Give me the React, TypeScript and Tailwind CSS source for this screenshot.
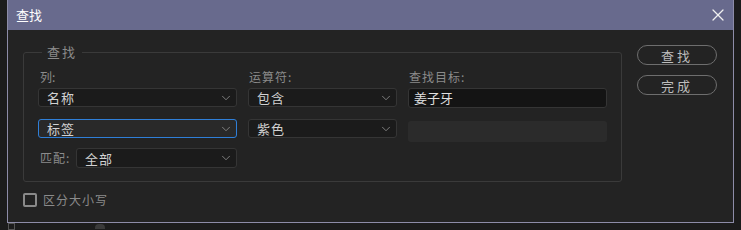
import { ChevronDown, X } from "lucide-react";

const font = { fontFamily: '"Noto Sans CJK SC", "Noto Sans", sans-serif' };

function Select({ value, focused, className }: { value: string; focused?: boolean; className: string }) {
  return (
    <div
      className={`flex items-center justify-between h-[19px] rounded-[3px] border pl-[8px] pr-[3px] text-[13px] leading-none ${
        focused ? "border-[#2f7fd8] bg-[#292929]" : "border-[#353535] bg-[#1b1b1b]"
      } ${className}`}
    >
      <span className="text-[#d2d2d2] tracking-[1px]">{value}</span>
      <ChevronDown size={14} strokeWidth={1.3} className="text-[#9a9a9a]" />
    </div>
  );
}

export default function App() {
  return (
    <div className="w-[741px] h-[230px] bg-[#1c1c1c] overflow-hidden" style={font}>
      <div className="ml-[7px] w-[727px] h-[223px] flex flex-col border-x border-b border-[#8d8ca8] bg-[#232323]">
        {/* title bar */}
        <div className="h-[30px] shrink-0 bg-[#686a8d] flex items-center justify-between pl-[8px] pr-[5px]">
          <span className="text-[13px] text-white">查找</span>
          <X size={20} strokeWidth={1.5} className="text-[#f0f0f0]" />
        </div>

        <div className="flex pl-[15px] pt-[15px]">
          <fieldset className="w-[599px] h-[137px] border border-[#3a3a3a] rounded-[3px] px-[14px]">
            <legend className="ml-[4px] px-[5px] text-[13px] text-[#8b8b8b] tracking-[2px] leading-[14px]">查找</legend>

            <div className="flex gap-[11px] mt-[12px] text-[12px] text-[#8b8b8b] leading-none">
              <div className="w-[199px] pl-[2px]">列:</div>
              <div className="w-[149px] pl-[1px] tracking-[1px]">运算符:</div>
              <div className="w-[199px] pl-[1px] tracking-[1px]">查找目标:</div>
            </div>

            <div className="flex gap-[11px] mt-[5px]">
              <Select value="名称" className="w-[199px]" />
              <Select value="包含" className="w-[149px]" />
              <div className="w-[199px] h-[20px] rounded-[3px] border border-[#353535] bg-[#141414] flex items-center pl-[5px] text-[13px] text-[#e0e0e0]">
                姜子牙
              </div>
            </div>

            <div className="flex gap-[11px] mt-[11px]">
              <Select value="标签" focused className="w-[199px]" />
              <Select value="紫色" className="w-[149px]" />
              <div className="w-[199px] h-[21px] mt-[2px] rounded-[3px] bg-[#2b2b2b]" />
            </div>

            <div className="flex items-center mt-[6px]">
              <span className="w-[38px] pl-[2px] text-[12px] text-[#8b8b8b] tracking-[1px]">匹配:</span>
              <Select value="全部" className="w-[161px] h-[20px]" />
            </div>
          </fieldset>

          <div className="ml-[15px] flex flex-col gap-[10px]">
            <button className="w-[80px] h-[20px] rounded-full border border-[#6e6e6e] text-[13px] text-[#bdbdbd] tracking-[3px] leading-none">
              查找
            </button>
            <button className="w-[80px] h-[20px] rounded-full border border-[#6e6e6e] text-[13px] text-[#bdbdbd] tracking-[3px] leading-none">
              完成
            </button>
          </div>
        </div>

        <label className="flex items-center ml-[15px] mt-[9px] gap-[6px]">
          <span className="w-[14px] h-[14px] rounded-[2px] border-[2px] border-[#8a8a8a]" />
          <span className="text-[12px] text-[#8b8b8b] tracking-[1px]">区分大小写</span>
        </label>
      </div>
      <div className="flex items-center h-[7px] pl-[8px] gap-[80px]">
        <span className="w-[7px] h-[7px] border border-[#555]" />
        <span className="w-[10px] h-[5px] bg-[#3a3a3a] rounded-t" />
      </div>
    </div>
  );
}
